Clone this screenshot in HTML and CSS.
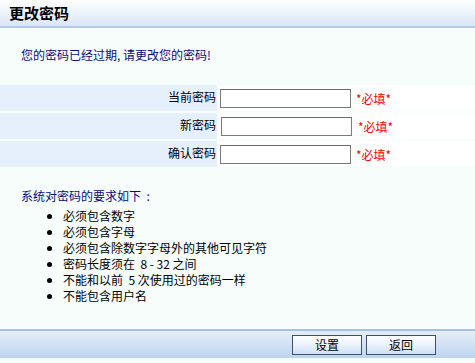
FILE: index.html
```html
<!DOCTYPE html>
<html lang="zh">
<head>
<meta charset="utf-8">
<title>更改密码</title>
<link rel="stylesheet" href="styles.css">
</head>
<body>
<div class="page">
  <div class="header">更改密码</div>
  <div class="content">
    <p class="notice">您的密码已经过期, 请更改您的密码!</p>
    <div class="form">
      <div class="label">当前密码</div>
      <div class="field"><input type="password" class="inp"><span class="req">*必填*</span></div>
      <div class="label">新密码</div>
      <div class="field shift"><input type="password" class="inp"><span class="req">*必填*</span></div>
      <div class="label">确认密码</div>
      <div class="field"><input type="password" class="inp"><span class="req">*必填*</span></div>
    </div>
    <p class="rules-title">系统对密码的要求如下 &nbsp;:</p>
    <ul class="rules">
      <li>必须包含数字</li>
      <li>必须包含字母</li>
      <li>必须包含除数字字母外的其他可见字符</li>
      <li>密码长度须在 &nbsp;8 - 32 之间</li>
      <li>不能和以前 &nbsp;5 次使用过的密码一样</li>
      <li>不能包含用户名</li>
    </ul>
  </div>
  <div class="footer">
    <button class="btn">设置</button>
    <button class="btn">返回</button>
  </div>
</div>
</body>
</html>
```

FILE: styles.css
```css
html, body {
  margin: 0;
  padding: 0;
  background: #f6fdfb;
}
body {
  font-family: "Noto Sans CJK SC", "DejaVu Sans", sans-serif;
  font-size: 12px;
  color: #000;
}
.page {
  width: 475px;
  height: 363px;
  display: flex;
  flex-direction: column;
}
.header {
  height: 26px;
  line-height: 26px;
  padding-left: 9px;
  font-size: 15px;
  font-weight: bold;
  background: linear-gradient(#ffffff, #f0f5fb 40%, #d9e6f6);
  border-bottom: 2px solid #b3cbe8;
}
.content {
  flex: 1;
  display: flex;
  flex-direction: column;
}
.notice {
  margin: 17px 0 0 21px;
  height: 20px;
  line-height: 20px;
  color: #0a0a80;
}
.form {
  margin-top: 20px;
  display: grid;
  grid-template-columns: 217px 1fr;
  grid-auto-rows: 26px;
  row-gap: 2px;
}
.label {
  background: #e6f0fc;
  text-align: right;
  padding-right: 1px;
  line-height: 24px;
}
.field {
  background: #ffffff;
  display: flex;
  align-items: center;
  padding-left: 3px;
}
.field.shift {
  padding-left: 4px;
}
.inp {
  box-sizing: border-box;
  width: 131px;
  height: 19px;
  margin: 0;
  border: 1px solid #7a7a7a;
  border-top-color: #6a6a6a;
  background: #fff;
  padding: 0;
}
.req {
  color: #ff0000;
  margin-left: 5px;
  font-size: 12px;
}
.field.shift .req {
  margin-left: 6px;
}
.rules-title {
  margin: 21px 0 0 21px;
  line-height: 16px;
  color: #0a0a80;
}
.rules {
  margin: 4px 0 0 0;
  padding-left: 63px;
  list-style: disc;
}
.rules li {
  line-height: 16px;
  height: 16px;
}
.footer {
  height: 27px;
  margin-bottom: 5px;
  border-top: 2px solid #a6bfec;
  background: linear-gradient(#e4eef9, #cfdff3 60%, #bcd3f0);
  display: flex;
  justify-content: flex-end;
  align-items: center;
  gap: 4px;
  padding-right: 39px;
}
.btn {
  box-sizing: border-box;
  width: 70px;
  height: 20px;
  margin: 0;
  padding: 0;
  border: 1px solid #3d5068;
  background: linear-gradient(#ffffff, #eaf2fc 50%, #cfe0f6);
  font-family: "Noto Sans CJK SC", sans-serif;
  font-size: 12px;
  color: #000;
  line-height: 18px;
}
```
